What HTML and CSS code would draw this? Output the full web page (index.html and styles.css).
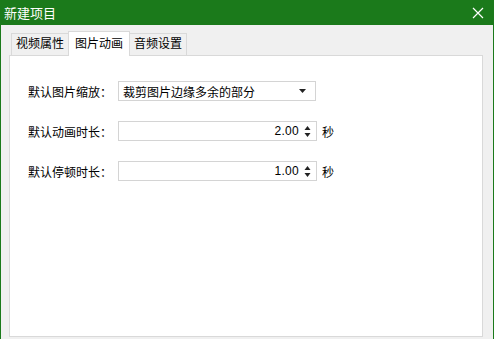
FILE: index.html
```html
<!DOCTYPE html>
<html lang="zh-CN">
<head>
    <meta charset="UTF-8">
    <title>新建项目</title>
    <link rel="stylesheet" href="styles.css">
</head>
<body>
    <div class="window">
        <div class="titlebar">
            <span class="title">新建项目</span>
            <span class="close">
                <svg width="12" height="12" viewBox="0 0 12 12"><path d="M1 1L11 11M11 1L1 11" stroke="#fff" stroke-width="1.2"/></svg>
            </span>
        </div>
        <div class="body">
            <div class="tabs">
                <div class="tab">视频属性</div>
                <div class="tab active">图片动画</div>
                <div class="tab">音频设置</div>
            </div>
            <div class="panel">
                <div class="row">
                    <label>默认图片缩放：</label>
                    <div class="select">
                        <span>裁剪图片边缘多余的部分</span>
                        <svg width="7" height="4" viewBox="0 0 7 4"><path d="M0 0H7L3.5 4Z" fill="#222"/></svg>
                    </div>
                </div>
                <div class="row">
                    <label>默认动画时长：</label>
                    <div class="spin">
                        <span class="value">2.00</span>
                        <svg width="7" height="11" viewBox="0 0 7 11"><path d="M3.5 0L6.5 4H0.5Z M0.5 7H6.5L3.5 11Z" fill="#222"/></svg>
                    </div>
                    <span class="unit">秒</span>
                </div>
                <div class="row">
                    <label>默认停顿时长：</label>
                    <div class="spin">
                        <span class="value">1.00</span>
                        <svg width="7" height="11" viewBox="0 0 7 11"><path d="M3.5 0L6.5 4H0.5Z M0.5 7H6.5L3.5 11Z" fill="#222"/></svg>
                    </div>
                    <span class="unit">秒</span>
                </div>
            </div>
        </div>
    </div>
</body>
</html>
```

FILE: styles.css
```css
body {
    margin: 0;
    font-family: "Liberation Sans", "Noto Sans CJK SC", sans-serif;
    font-size: 12px;
    color: #000;
}

.window {
    width: 494px;
    height: 339px;
    box-sizing: border-box;
    border-left: 1px solid #1b7a1b;
    border-right: 1px solid #1b7a1b;
    background-color: #f0f0f0;
    display: flex;
    flex-direction: column;
}

.titlebar {
    height: 25px;
    margin: 0 -1px;
    background-color: #1b7a1b;
    color: #fff;
    display: flex;
    align-items: center;
    justify-content: space-between;
    padding: 0 10px 0 4px;
}

.title {
    font-size: 13px;
}

.close {
    display: flex;
}

.body {
    flex: 1;
    display: flex;
    flex-direction: column;
    padding: 5px 10px 2px 8px;
}

.tabs {
    display: flex;
    align-items: flex-end;
    padding-left: 2px;
    height: 25px;
}

.tab {
    height: 21px;
    line-height: 21px;
    padding: 0 4px;
    border: 1px solid #d9d9d9;
    border-bottom: none;
    background-color: #f0f0f0;
    font-size: 12px;
}

.tab.active {
    height: 24px;
    line-height: 24px;
    padding: 0 6px;
    margin: 0 -1px -1px -1px;
    background-color: #fff;
    position: relative;
    z-index: 1;
}

.panel {
    flex: 1;
    background-color: #fff;
    border: 1px solid #d9d9d9;
    padding: 25px 0 0 18px;
    display: flex;
    flex-direction: column;
    gap: 20px;
}

.row {
    display: flex;
    align-items: center;
    height: 20px;
}

label {
    width: 90px;
    font-size: 12px;
}

.select, .spin {
    height: 18px;
    border: 1px solid #d4d4d4;
    display: flex;
    align-items: center;
}

.select {
    justify-content: space-between;
    padding: 0 9px 0 4px;
    width: 183px;
}

.spin {
    justify-content: flex-end;
    padding-right: 5px;
    width: 192px;
}

.value {
    margin-right: 5px;
    letter-spacing: 0.3px;
}

.unit {
    margin-left: 5px;
}
```
